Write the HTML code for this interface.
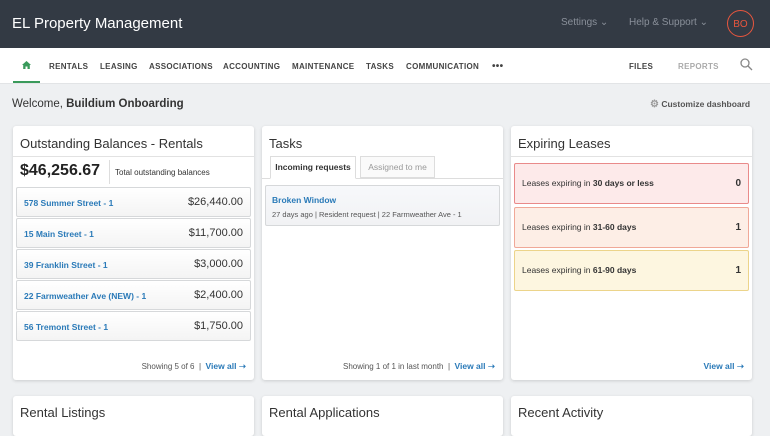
<!DOCTYPE html>
<html><head><style>
*{box-sizing:border-box;margin:0;padding:0}
body{width:770px;height:420px;overflow:hidden;background:#eef0f2;font-family:"Liberation Sans",sans-serif;position:relative;color:#333}
.hdr{position:absolute;left:0;top:0;width:770px;height:48px;background:#333a44}
.abs{position:absolute;white-space:nowrap}
.nav{position:absolute;top:48px;left:0;width:770px;height:36px;background:#fff;border-bottom:1px solid #e2e4e6}
.nv{position:absolute;top:14px;font-size:8px;font-weight:bold;color:#444;letter-spacing:.3px}
.card{position:absolute;background:#fff;border-radius:3px;box-shadow:0 1px 3px rgba(0,0,0,.15)}
.ct{position:absolute;left:7px;top:10px;font-size:13px;color:#333}
.row{position:absolute;left:3px;width:235px;height:30px;border:1px solid #d6d8da;border-radius:2px;background:linear-gradient(#fff,#f4f4f4)}
.row a{position:absolute;left:7px;top:10px;font-size:8.5px;font-weight:bold;color:#2a7ab8}
.row span{position:absolute;right:7px;top:8px;font-size:11px;color:#333}
.lb{position:absolute;left:3px;width:235px;height:41px;border-radius:2px;font-size:8.5px}
.lb .t{position:absolute;left:7px;top:14px}
.lb .n{position:absolute;right:7px;top:14px;font-size:10px;font-weight:bold}
.ft{position:absolute;top:235px;font-size:8px;color:#555}
.va{color:#2a7ab8;font-weight:bold;font-size:8.5px}
</style></head><body>
<div class="hdr"></div>
<div class="abs" style="left:12px;top:15px;font-size:15px;color:#fff">EL Property Management</div>
<div class="abs" style="left:561px;top:17px;font-size:10px;color:#8a909a">Settings ⌄</div>
<div class="abs" style="left:629px;top:17px;font-size:10px;color:#8a909a">Help &amp; Support ⌄</div>
<div class="abs" style="left:727px;top:10px;width:27px;height:27px;border:1.5px solid #e8563e;border-radius:50%;color:#e8563e;font-size:10px;display:flex;align-items:center;justify-content:center;padding-top:2px">BO</div>
<div class="nav">
<svg style="position:absolute;left:22px;top:13px" width="9" height="8" viewBox="0 0 9 8"><path d="M4.5 0L0 4h1.2v4h2.3V5.5h2V8h2.3V4H9z" fill="#3a9a5b"/></svg>
<div style="position:absolute;left:13px;top:33px;width:27px;height:2px;background:#3a9a5b"></div>
<div class="nv" style="left:49px">RENTALS</div>
<div class="nv" style="left:100px">LEASING</div>
<div class="nv" style="left:149px">ASSOCIATIONS</div>
<div class="nv" style="left:223px">ACCOUNTING</div>
<div class="nv" style="left:292px">MAINTENANCE</div>
<div class="nv" style="left:366px">TASKS</div>
<div class="nv" style="left:406px">COMMUNICATION</div>
<div class="nv" style="left:492px;top:13px;font-size:10px">•••</div>
<div class="nv" style="left:629px">FILES</div>
<div class="nv" style="left:678px;color:#aaa">REPORTS</div>
<svg style="position:absolute;left:740px;top:10px" width="13" height="13" viewBox="0 0 13 13"><circle cx="5" cy="5" r="4" fill="none" stroke="#888" stroke-width="1.3"/><path d="M8 8l4 4" stroke="#888" stroke-width="1.3"/></svg>
</div>
<div class="abs" style="left:12px;top:98px;font-size:11.5px;color:#333">Welcome, <b>Buildium Onboarding</b></div>
<div class="abs" style="left:650px;top:99px;font-size:8.5px;color:#555;font-weight:bold"><span style="color:#999;font-size:10px">⚙</span> Customize dashboard</div>

<div class="card" style="left:13px;top:126px;width:241px;height:254px">
<div class="ct">Outstanding Balances - Rentals</div>
<div style="position:absolute;left:0;top:30px;width:241px;border-top:1px solid #e2e2e2"></div>
<div class="abs" style="left:7px;top:36px;font-size:16px;font-weight:bold;color:#222">$46,256.67</div>
<div style="position:absolute;left:96px;top:34px;height:24px;border-left:1px solid #ddd"></div>
<div class="abs" style="left:102px;top:42px;font-size:8px;color:#333">Total outstanding balances</div>
<div class="row" style="top:61px"><a>578 Summer Street - 1</a><span>$26,440.00</span></div>
<div class="row" style="top:92px"><a>15 Main Street - 1</a><span>$11,700.00</span></div>
<div class="row" style="top:123px"><a>39 Franklin Street - 1</a><span>$3,000.00</span></div>
<div class="row" style="top:154px"><a>22 Farmweather Ave (NEW) - 1</a><span>$2,400.00</span></div>
<div class="row" style="top:185px"><a>56 Tremont Street - 1</a><span>$1,750.00</span></div>
<div class="ft" style="right:8px">Showing 5 of 6 &nbsp;| &nbsp;<span class="va">View all ➝</span></div>
</div>

<div class="card" style="left:262px;top:126px;width:241px;height:254px">
<div class="ct">Tasks</div>
<div style="position:absolute;left:0;top:52px;width:241px;border-top:1px solid #ddd"></div>
<div class="abs" style="left:8px;top:30px;width:86px;height:23px;border:1px solid #ddd;border-bottom:1px solid #fff;background:#fff;font-size:8.5px;font-weight:bold;text-align:center;line-height:21px">Incoming requests</div>
<div class="abs" style="left:98px;top:30px;width:75px;height:22px;border:1px solid #ddd;background:#fafafa;font-size:8.5px;color:#999;text-align:center;line-height:21px">Assigned to me</div>
<div class="abs" style="left:3px;top:59px;width:235px;height:41px;border:1px solid #d6d8da;border-radius:2px;background:linear-gradient(#f7f8fb,#f1f2f4)"></div>
<div class="abs" style="left:10px;top:69px;font-size:8.5px;font-weight:bold;color:#2a7ab8">Broken Window</div>
<div class="abs" style="left:10px;top:84px;font-size:7.5px;color:#555">27 days ago | Resident request | 22 Farmweather Ave - 1</div>
<div class="ft" style="right:8px">Showing 1 of 1 in last month &nbsp;| &nbsp;<span class="va">View all ➝</span></div>
</div>

<div class="card" style="left:511px;top:126px;width:241px;height:254px">
<div class="ct">Expiring Leases</div>
<div style="position:absolute;left:0;top:30px;width:241px;border-top:1px solid #e2e2e2"></div>
<div class="lb" style="top:37px;background:#fdeaea;border:1px solid #e98a8a"><span class="t">Leases expiring in <b>30 days or less</b></span><span class="n">0</span></div>
<div class="lb" style="top:81px;background:#fdeee6;border:1px solid #f0a898"><span class="t">Leases expiring in <b>31-60 days</b></span><span class="n">1</span></div>
<div class="lb" style="top:124px;background:#fdf6e0;border:1px solid #ecd48a"><span class="t">Leases expiring in <b>61-90 days</b></span><span class="n">1</span></div>
<div class="ft" style="right:8px"><span class="va">View all ➝</span></div>
</div>

<div class="card" style="left:13px;top:396px;width:241px;height:40px"><div class="ct" style="top:9px">Rental Listings</div></div>
<div class="card" style="left:262px;top:396px;width:241px;height:40px"><div class="ct" style="top:9px">Rental Applications</div></div>
<div class="card" style="left:511px;top:396px;width:241px;height:40px"><div class="ct" style="top:9px">Recent Activity</div></div>
</body></html>
